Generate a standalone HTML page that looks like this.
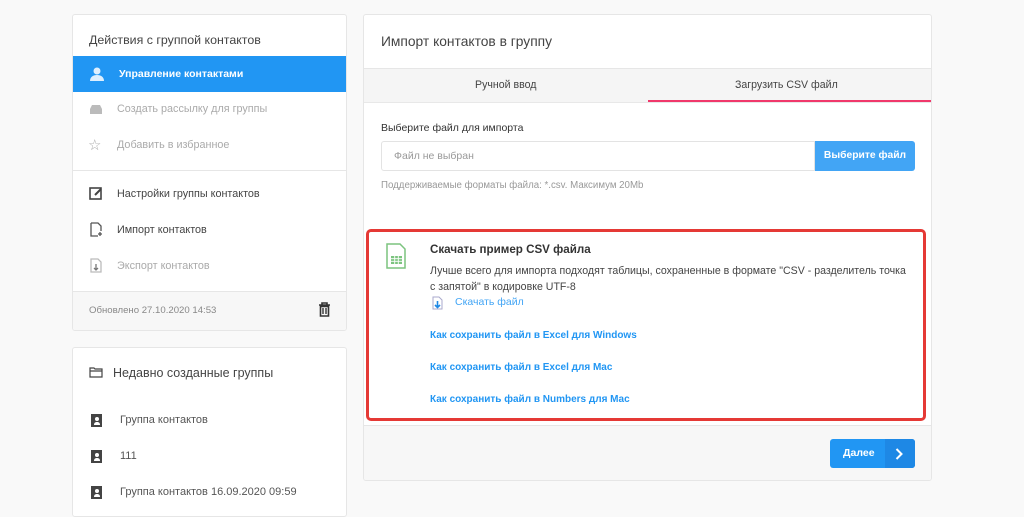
<!DOCTYPE html>
<html><head><meta charset="utf-8"><style>
*{box-sizing:border-box;margin:0;padding:0}
body{width:1024px;height:501px;overflow:hidden;background:#f9f9f9;font-family:"Liberation Sans",sans-serif;color:#333;position:relative}
.p{position:absolute;background:#fff;border:1px solid #e6e6e6;border-radius:3px}
.t{position:absolute;white-space:nowrap}
.ic{position:absolute}
</style></head><body>
<div class="p" style="left:72px;top:14px;width:275px;height:317px;overflow:hidden">
 <div class="t" style="left:16px;top:18px;font-size:12.4px;color:#444">Действия с группой контактов</div>
 <div style="position:absolute;left:0;top:41px;width:275px;height:36px;background:#2196f3"></div>
 <svg class="ic" style="left:16px;top:51px" width="16" height="16" viewBox="0 0 16 16"><circle cx="8" cy="5" r="3.5" fill="#fff" opacity=".85"/><path d="M1 15c0-4 3-6 7-6s7 2 7 6z" fill="#fff" opacity=".85"/></svg>
 <div class="t" style="left:46px;top:53px;font-size:10.5px;color:#fff;font-weight:bold">Управление контактами</div>
 <svg class="ic" style="left:16px;top:88px" width="14" height="12"><path d="M1 6h12v5H1z M3 2h8l2 4H1z" fill="#bbb"/></svg>
 <div class="t" style="left:44px;top:88px;font-size:10.8px;color:#aaa">Создать рассылку для группы</div>
 <div class="t" style="left:15px;top:121px;font-size:15px;color:#aaa">☆</div>
 <div class="t" style="left:44px;top:124px;font-size:10.8px;color:#aaa">Добавить в избранное</div>
 <div style="position:absolute;left:0;top:155px;width:275px;border-top:1px solid #e6e6e6"></div>
 <svg class="ic" style="left:16px;top:171px" width="14" height="14"><rect x="1" y="2" width="11" height="11" fill="none" stroke="#444" stroke-width="1.6"/><path d="M6 9l6-6" stroke="#444" stroke-width="2"/></svg>
 <div class="t" style="left:44px;top:173px;font-size:10.8px;color:#444">Настройки группы контактов</div>
 <svg class="ic" style="left:17px;top:207px" width="13" height="15"><path d="M1 1h7l3 3v5M1 1v13h7" fill="none" stroke="#555" stroke-width="1.3"/><path d="M10 10v4M8 12h4" stroke="#555" stroke-width="1.3"/></svg>
 <div class="t" style="left:44px;top:209px;font-size:10.8px;color:#444">Импорт контактов</div>
 <svg class="ic" style="left:17px;top:243px" width="13" height="15"><path d="M1 1h7l3 3v10H1z" fill="none" stroke="#bbb" stroke-width="1.3"/><path d="M6 6v6M4 10l2 2 2-2" stroke="#777" stroke-width="1.3" fill="none"/></svg>
 <div class="t" style="left:44px;top:245px;font-size:10.8px;color:#aaa">Экспорт контактов</div>
 <div style="position:absolute;left:0;top:276px;width:275px;height:41px;background:#f7f7f7;border-top:1px solid #e6e6e6"></div>
 <div class="t" style="left:16px;top:290px;font-size:9.6px;color:#888">Обновлено 27.10.2020 14:53</div>
 <svg class="ic" style="left:245px;top:287px" width="13" height="15"><path d="M1 3h11M4 3V1h5v2M2.5 4.5h8V14h-8z" fill="none" stroke="#333" stroke-width="1.6"/><path d="M5 6v6M8 6v6" stroke="#333" stroke-width="1.4"/></svg>
</div>
<div class="p" style="left:72px;top:347px;width:275px;height:170px">
 <svg class="ic" style="left:16px;top:18px" width="14" height="12"><path d="M1 2h4l1 1h7v8H1z M1 5h12" fill="none" stroke="#444" stroke-width="1.2"/></svg>
 <div class="t" style="left:40px;top:18px;font-size:12.5px;color:#444">Недавно созданные группы</div>
 <svg class="ic" style="left:17px;top:66px" width="12" height="13"><rect x="1" y="0" width="11" height="13" fill="#444"/><circle cx="7" cy="5" r="2" fill="#fff"/><path d="M4 11c0-2 1-3 3-3s3 1 3 3z" fill="#fff"/></svg>
 <div class="t" style="left:47px;top:66px;font-size:11px;color:#555">Группа контактов</div>
 <svg class="ic" style="left:17px;top:102px" width="12" height="13"><rect x="1" y="0" width="11" height="13" fill="#444"/><circle cx="7" cy="5" r="2" fill="#fff"/><path d="M4 11c0-2 1-3 3-3s3 1 3 3z" fill="#fff"/></svg>
 <div class="t" style="left:47px;top:102px;font-size:11px;color:#555">111</div>
 <svg class="ic" style="left:17px;top:138px" width="12" height="13"><rect x="1" y="0" width="11" height="13" fill="#444"/><circle cx="7" cy="5" r="2" fill="#fff"/><path d="M4 11c0-2 1-3 3-3s3 1 3 3z" fill="#fff"/></svg>
 <div class="t" style="left:47px;top:138px;font-size:11px;color:#555">Группа контактов 16.09.2020 09:59</div>
</div>
<div class="p" style="left:363px;top:14px;width:569px;height:467px;overflow:hidden">
 <div class="t" style="left:17px;top:19px;font-size:13.8px;color:#444">Импорт контактов в группу</div>
 <div style="position:absolute;left:0;top:53px;width:569px;height:35px;background:#f5f5f5;border-top:1px solid #e6e6e6;border-bottom:1px solid #e8e8e8"></div>
 <div class="t" style="left:111px;top:64px;font-size:10.6px;color:#444">Ручной ввод</div>
 <div class="t" style="left:371px;top:64px;font-size:10.6px;color:#444">Загрузить CSV файл</div>
 <div style="position:absolute;left:284px;top:85px;width:285px;height:2px;background:#f0386b"></div>
 <div class="t" style="left:17px;top:107px;font-size:10.5px;color:#333">Выберите файл для импорта</div>
 <div style="position:absolute;left:17px;top:126px;width:434px;height:30px;border:1px solid #e3e3e3;border-radius:3px 0 0 3px"></div>
 <div class="t" style="left:30px;top:135px;font-size:10.5px;color:#999">Файл не выбран</div>
 <div style="position:absolute;left:451px;top:126px;width:100px;height:30px;background:#42a5f5;border-radius:0 3px 3px 0;color:#fff;font-size:10.3px;font-weight:bold;text-align:center;line-height:30px">Выберите файл</div>
 <div class="t" style="left:17px;top:165px;font-size:9.7px;color:#999">Поддерживаемые форматы файла: *.csv. Максимум 20Mb</div>
 <div style="position:absolute;left:0;top:410px;width:569px;height:57px;background:#f7f7f7;border-top:1px solid #e6e6e6"></div>
 <div style="position:absolute;left:466px;top:424px;width:85px;height:29px;background:#2196f3;border-radius:3px;overflow:hidden">
  <div class="t" style="left:13px;top:0;line-height:29px;font-size:10.5px;color:#fff;font-weight:bold">Далее</div>
  <div style="position:absolute;left:55px;top:0;width:30px;height:29px;background:#1e88e5"></div>
  <svg class="ic" style="left:65px;top:9px" width="8" height="12"><path d="M1.5 1l5 5-5 5" fill="none" stroke="#fff" stroke-width="2"/></svg>
 </div>
</div>
<div style="position:absolute;left:366px;top:229px;width:560px;height:192px;border:3px solid #e53935;border-radius:5px;background:#fff"></div>
<svg class="ic" style="left:386px;top:243px" width="20" height="26"><path d="M1 1h13l5 5v19H1z" fill="#fff" stroke="#7cc47f" stroke-width="1.5"/><rect x="5" y="13" width="11" height="8" fill="#7cc47f"/><path d="M5 15.7h11M5 18.3h11M8.7 13v8M12.3 13v8" stroke="#fff" stroke-width=".9"/></svg>
<div class="t" style="left:430px;top:243px;font-size:11.6px;color:#333;font-weight:bold">Скачать пример CSV файла</div>
<div class="t" style="left:430px;top:265px;font-size:10.6px;color:#444">Лучше всего для импорта подходят таблицы, сохраненные в формате "CSV - разделитель точка</div>
<div class="t" style="left:430px;top:281px;font-size:10.6px;color:#444">с запятой" в кодировке UTF-8</div>
<svg class="ic" style="left:432px;top:296px" width="11" height="14"><path d="M1 1h6l3 3v9H1z" fill="none" stroke="#aac" stroke-width="1"/><path d="M5.5 5v6M3 9l2.5 2.5L8 9" fill="none" stroke="#1e88e5" stroke-width="1.6"/></svg>
<div class="t" style="left:455px;top:296px;font-size:10.5px;color:#42a5f5">Скачать файл</div>
<div class="t" style="left:430px;top:330px;font-size:10px;color:#2196f3;font-weight:bold">Как сохранить файл в Excel для Windows</div>
<div class="t" style="left:430px;top:362px;font-size:10px;color:#2196f3;font-weight:bold">Как сохранить файл в Excel для Mac</div>
<div class="t" style="left:430px;top:394px;font-size:10px;color:#2196f3;font-weight:bold">Как сохранить файл в Numbers для Mac</div>
</body></html>
